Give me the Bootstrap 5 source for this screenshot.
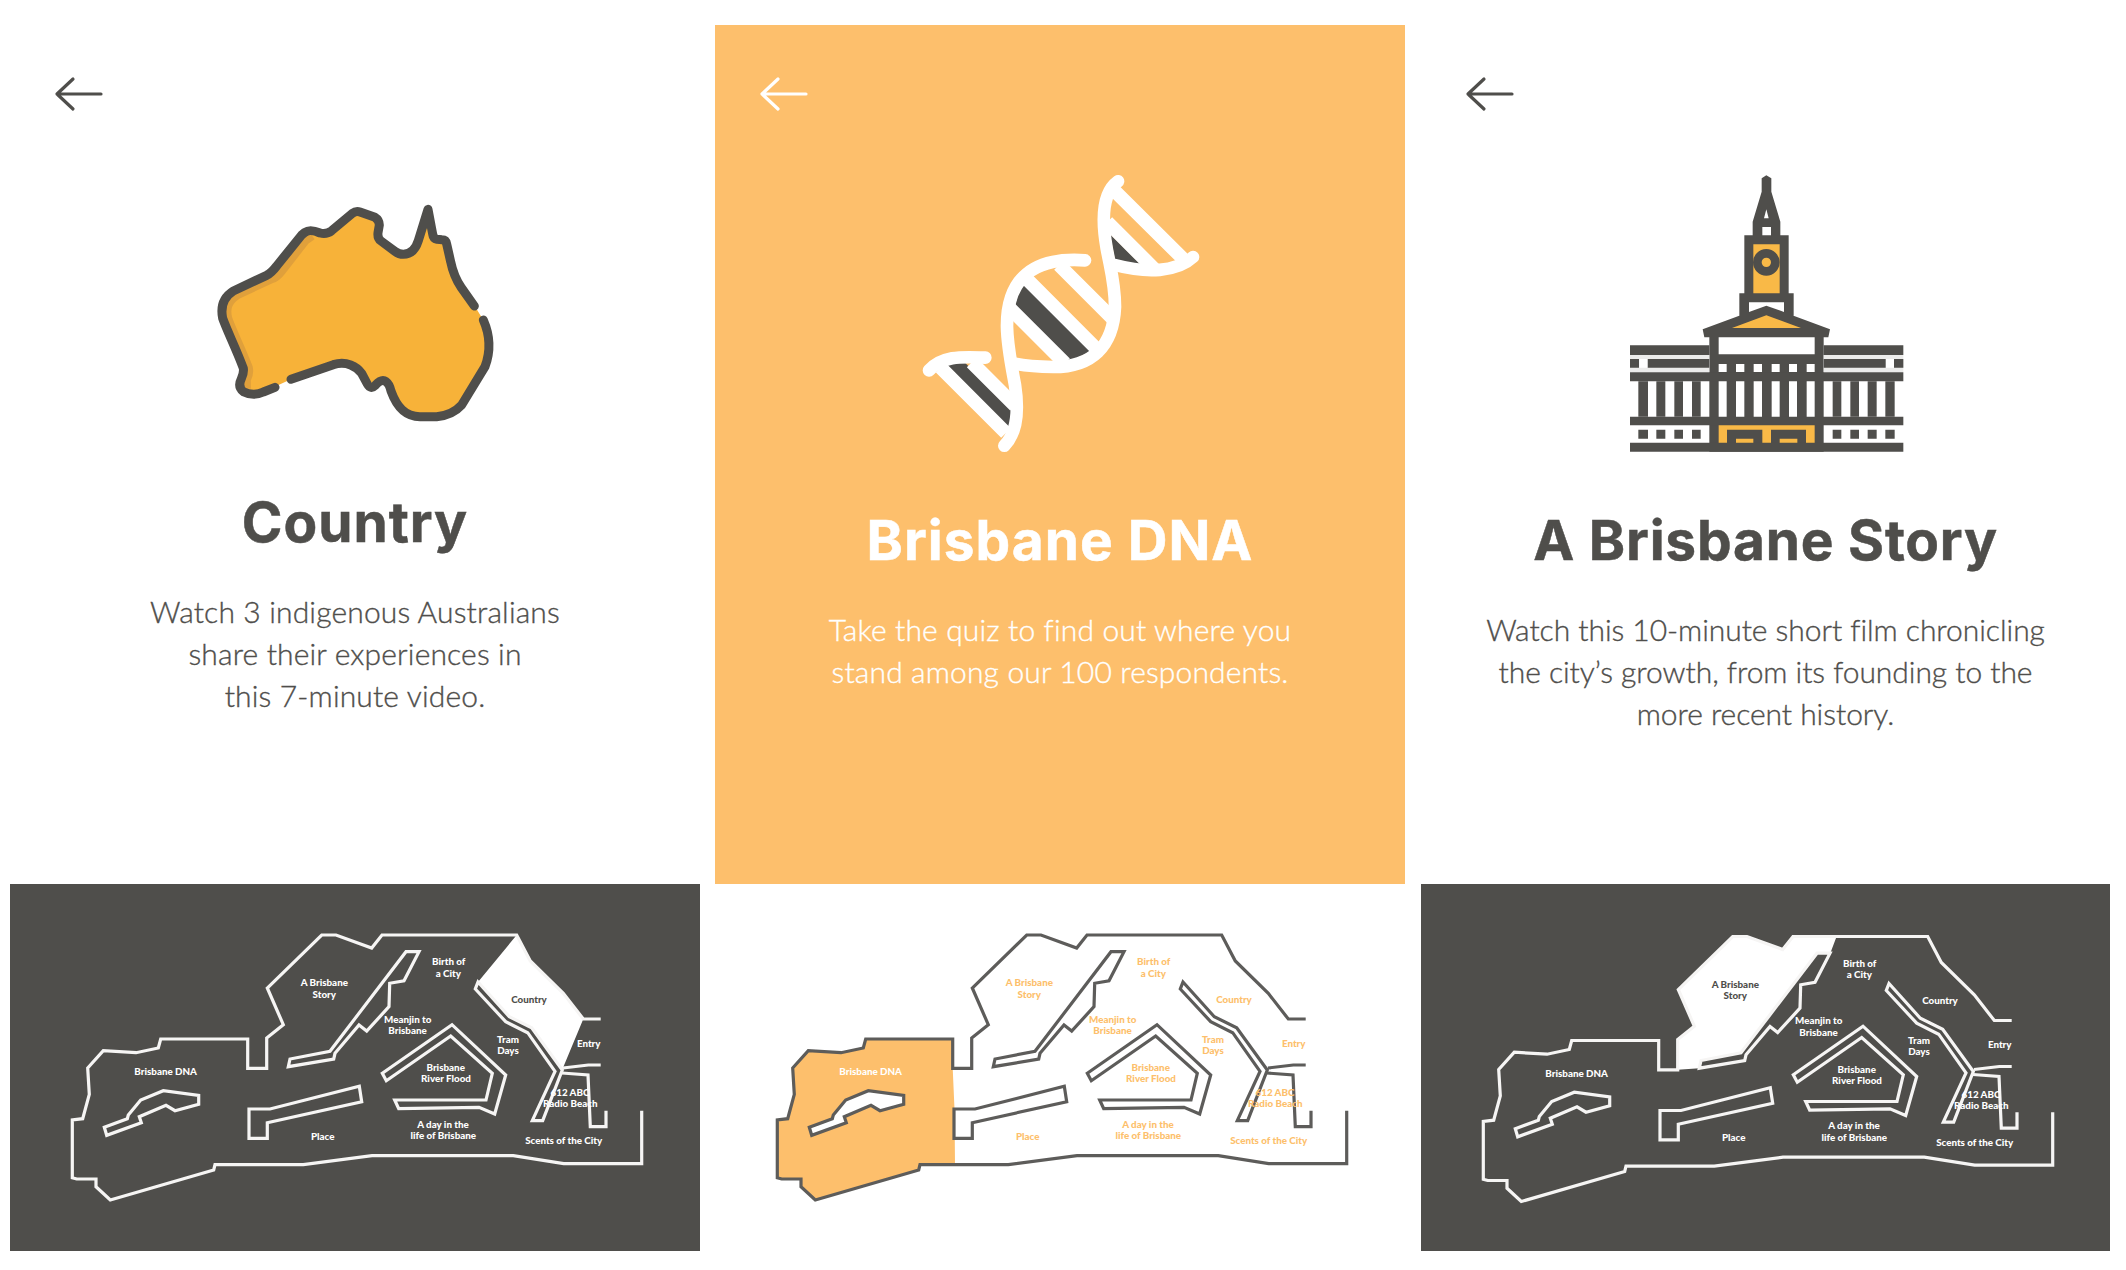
<!DOCTYPE html>
<html lang="en">
<head>
<meta charset="utf-8">
<title>Museum guide</title>
<link href="https://cdn.jsdelivr.net/npm/bootstrap@5.3.0/dist/css/bootstrap.min.css" rel="stylesheet">
<style>
:root{--ink:#4f4e4b;--sun:#fdbf6c}
body{font-family:Lato,"Liberation Sans",sans-serif;color:var(--ink);background:#fff}
.screens{padding:25px 15px 0 10px;gap:15px}
.screen{width:690px;flex:none}
.screen-last{width:689px;margin-left:1px}
.info{height:859px}
.info-sun{background:var(--sun);color:#fff}
.back-btn{margin:48px 0 0 41px;width:56px;height:42px;color:inherit}
.art{margin-top:45px;flex:none}
.art-low{margin-top:75px}
.screen-last .art{margin-right:1px}
.title{font-family:Inter,"Liberation Sans",sans-serif;font-weight:700;font-size:55px;line-height:60px;letter-spacing:1px;margin:40.400px 0 0;white-space:nowrap;-webkit-text-stroke:.5px currentColor}
.screen-last .title{letter-spacing:.8px}
.art-low + .title{margin-top:52px}
.story{font-weight:300;font-size:30px;line-height:42.300px;letter-spacing:.150px;margin:37.500px 0 0;white-space:nowrap;-webkit-text-stroke:.35px currentColor}
.screen-last .story{letter-spacing:-.050px}
.plan{height:367px;background:var(--ink);--line:#f6f5f4;--void:#4f4e4b;--label:#fff}
.plan-light{background:#fff;--line:#5d5c5a;--void:#fff;--label:#fdbf6c}
.floor-labels text{font-family:Lato,"Liberation Sans",sans-serif;font-weight:900;font-size:9.800px;text-anchor:middle}
</style>
</head>
<body>
<svg width="0" height="0" class="position-absolute" aria-hidden="true">
  <symbol id="arrow" viewBox="0 0 56 42"><path d="M50 21H6M22 6L6 21l16 15" fill="none" stroke="currentColor" stroke-width="3.200" stroke-linecap="round" stroke-linejoin="round"/></symbol>
  <symbol id="floor" viewBox="10 884 690 367">
    <g fill="none" stroke="var(--line)" stroke-width="3.200">
      <path d="M641.700 1110.700V1163.700H563.700L513.300 1155.700H372L303.300 1164.700H215L213.700 1170 110.300 1200 96 1186.700V1179H76.700L72.300 1177.700V1120L82.700 1118.700 89.300 1094.300 87.700 1068 103.300 1050.700 136 1052.700 158.300 1048 160.700 1039H247.700V1068.300H266.700V1038L283.300 1024.700 267.300 988 321.700 935H336L371.700 948 382 935H516.700L530.300 961 563.300 993.300 583.300 1019H600.700"/>
      <path d="M600.700 1065H588.300L563 1068"/>
      <path d="M562 1073 588 1075 590.300 1126.700H606V1110.700"/>
      <g fill="var(--void)">
        <path d="M478 982 509.300 1016.700 531.700 1027.700 562.300 1070 542.700 1120.700H532.300L555 1071.300 527.700 1032.700 505.700 1021.700 475.300 989Z"/>
        <path d="M382.300 1073.300 452 1024.700 505.700 1075 494.700 1114 479 1107.300 398.700 1108.700 394.700 1100H486L492.300 1073.300 450.700 1036 386.300 1080.700Z"/>
        <path d="M406 951.700H419L404 980.700 389.700 983.300 389 1006.700 366.700 1031 359 1025 335 1053.300 333.700 1059 288.300 1066.700 290 1059 330 1051.300Z"/>
        <path d="M249 1109H270L359.300 1086.300 361.700 1101.700 267.300 1122.700V1138.300H249Z"/>
        <path d="M104.300 1127.300 127.300 1118.700 128.300 1115 140.700 1100 163.300 1090.700 198.700 1095.300V1104.300L175 1110.700 166 1105.300 139.300 1116.700 141.300 1122.700 106.700 1135.300Z"/>
      </g>
    </g>
    <g class="floor-labels" fill="var(--label)">
      <g style="fill:var(--story-label,var(--label))"><text x="324.300" y="986.300">A Brisbane</text><text x="324.300" y="997.700">Story</text></g>
      <text x="165.700" y="1075.300" style="fill:var(--dna-label,var(--label))">Brisbane DNA</text>
      <text x="322.700" y="1139.700">Place</text>
      <text x="448.700" y="965.300">Birth of</text><text x="448.400" y="976.700">a City</text>
      <text x="529" y="1002.700" style="fill:var(--country-label,var(--label))">Country</text>
      <text x="407.700" y="1022.700">Meanjin to</text><text x="407.500" y="1034">Brisbane</text>
      <text x="508" y="1042.700">Tram</text><text x="508" y="1053.700">Days</text>
      <text x="588.700" y="1046.700">Entry</text>
      <text x="445.700" y="1071.300">Brisbane</text><text x="446" y="1082.300">River Flood</text>
      <text x="443" y="1127.700">A day in the</text><text x="443.300" y="1139">life of Brisbane</text>
      <text x="570" y="1096.300">612 ABC</text><text x="570.300" y="1107.300">Radio Beach</text>
      <text x="563.700" y="1144.300">Scents of the City</text>
    </g>
  </symbol>
</svg>

<main class="screens d-flex align-items-start">
  <section class="screen">
    <div class="info d-flex flex-column align-items-center text-center">
      <button class="back-btn btn p-0 border-0 align-self-start d-flex" aria-label="Back"><svg width="56" height="42"><use href="#arrow"/></svg></button>
      <svg class="art art-low" width="310" height="250" viewBox="0 0 930 750" fill="none" stroke-linecap="round" stroke-linejoin="round">
        <path fill="#f7b239" d="M824 348C790 300 770 275 757 225Q742 165 738 155L700 149 684 58 655 165Q640 193 610 193 597 193 585 184L540 152Q532 145 534 128L538 105Q538 90 525 82L480 66 395 122 360 129 315 127 230 228 200 256 100 303C65 325 62 355 68 385 80 420 110 480 130 535L124 600 190 606 273 568 400 524C440 512 470 530 485 550L510 592 558 575 573 603C585 650 615 680 660 680H710Q760 675 785 645L855 530C870 490 872 440 850 390Z"/>
        <path stroke="#e0a03b" stroke-width="27" stroke-linecap="butt" d="M336 137 316 151 245 242Q230 262 215 266L112 314C80 335 77 358 83 385 95 420 125 480 145 533Q149 550 139 570V596"/>
        <g stroke="#4f4e4b" stroke-width="27">
          <path d="M823 348 784 293C765 265 757 240 752 215L740 162Q738 149 726 149L711 148Q700 146 698 132L684 58 655 152Q642 193 610 193 597 193 585 184L543 153Q532 145 534 128L538 105Q538 90 525 82L480 66Q468 62 457 70L395 122Q380 134 360 129 330 116 315 127L305 135 230 228Q215 248 200 256L100 303C65 325 62 355 68 385 80 420 110 480 130 535Q132 550 124 566 112 590 130 605 160 620 190 606L225 592"/>
          <path d="M273 568 400 524C440 512 470 530 485 550L502 582Q512 600 526 586 545 565 558 575 568 582 573 603C590 650 615 680 660 680H710C745 677 767 665 785 645L855 530C870 490 872 440 850 390"/>
        </g>
      </svg>
      <h1 class="title">Country</h1>
      <p class="story">Watch 3 indigenous Australians<br>share their experiences in<br>this 7-minute video.</p>
    </div>
    <div class="plan" style="--country-label:#4f4e4b">
      <svg class="d-block" width="690" height="367" viewBox="10 884 690 367">
        <path fill="#fff" d="M516.700 935 530.300 961 563.300 993.300 583.300 1019 562.500 1069 531.700 1027.700 509.300 1016.700 478 982Z"/>
        <use href="#floor" x="10" y="884" width="690" height="367"/>
      </svg>
    </div>
  </section>

  <section class="screen">
    <div class="info info-sun d-flex flex-column align-items-center text-center">
      <button class="back-btn btn p-0 border-0 align-self-start d-flex" aria-label="Back"><svg width="56" height="42"><use href="#arrow"/></svg></button>
      <svg class="art" width="320" height="310" viewBox="0 0 960 930" fill="none" stroke="#fff" stroke-linecap="round">
        <g fill="#4f4e4b" stroke="none"><path d="M630 222 725 316 645 300ZM371 370 575 572 510 605 340 434ZM138 612 193 606 335 750 327 808Z"/></g>
        <g stroke-width="41" stroke-linecap="butt"><path d="M640 89 850 297M622 186 766 330M477 315 635 473M373 350 590 567M330 445 495 610M215 607 345 737M122 623 318 819"/></g>
        <g stroke-width="38">
          <path d="M654 64C607 98 604 175 620 265 632 330 645 370 645 440 640 560 575 621 460 621 415 620 380 618 345 611"/>
          <path d="M555 301C400 290 320 355 321 500 322 560 335 620 345 675 358 760 350 820 313 857"/>
          <path d="M87 631C130 585 190 591 256 593"/>
          <path d="M879 291C830 337 740 340 645 315"/>
        </g>
      </svg>
      <h1 class="title">Brisbane DNA</h1>
      <p class="story">Take the quiz to find out where you<br>stand among our 100 respondents.</p>
    </div>
    <div class="plan plan-light" style="--dna-label:#fff">
      <svg class="d-block" width="690" height="367" viewBox="10 884 690 367">
        <path fill="#fdbf6c" d="M250 1164.700H215L213.700 1170 110.300 1200 96 1186.700V1179H72.300V1120L82.700 1118.700 89.300 1094.300 87.700 1068 103.300 1050.700 136 1052.700 158.300 1048 160.700 1039H247.700V1068.300L249.500 1109Z"/>
        <use href="#floor" x="10" y="884" width="690" height="367"/>
      </svg>
    </div>
  </section>

  <section class="screen screen-last">
    <div class="info d-flex flex-column align-items-center text-center">
      <button class="back-btn btn p-0 border-0 align-self-start d-flex" aria-label="Back"><svg width="56" height="42"><use href="#arrow"/></svg></button>
      <svg class="art" width="310" height="310" viewBox="0 0 930 930" fill="#4f4e4b">
        <path d="M455 55 469 46 484 55V95L511 185V228H428V185L455 95ZM403 226H536V400H551V470H388V400H403ZM469 437 660 508 655 532H641V875H298V532H283L278 508Z"/>
        <g fill="#ececeb"><path d="M60 585H298V637H60ZM641 585H880V637H641Z"/></g>
        <path d="M60 556H298V585H60ZM641 556H880V585H641ZM60 597H87V623H60ZM113 597H298V623H113ZM641 597H827V623H641ZM852 597H880V623H852ZM60 637H880V664H60ZM60 770H880V796H60ZM60 848H880V875H60Z"/>
        <path d="M85 664h29v106h-29zM139 664h27v106h-27zM193 664h26v106h-26zM246 664h26v106h-26zM668 664h26v106h-26zM721 664h26v106h-26zM773 664h27v106h-27zM826 664h28v106h-28z"/>
        <path d="M85 809h29v27h-29zM139 809h27v27h-27zM193 809h26v27h-26zM246 809h26v27h-26zM668 809h26v27h-26zM721 809h26v27h-26zM773 809h27v27h-27zM826 809h28v27h-28z"/>
        <g fill="#fff"><path d="M469 148 476 175H462ZM457 201H483V226H457ZM417 427H522V456L469 437 417 456ZM326 532H614V583H326ZM88 597h24v26h-24zM828 597h24v26h-24z"/>
        <path d="M326 612h24v24h-24zM378 612h25v24h-25zM431 612h25v24h-25zM485 612h24v24h-24zM537 612h24v24h-24zM590 612h24v24h-24zM326 664h24v106h-24zM378 664h25v106h-25zM431 664h25v106h-25zM485 664h24v106h-24zM537 664h24v106h-24zM590 664h24v106h-24z"/></g>
        <path fill="#f9b947" d="M430 253H509V400H430ZM469 466 573 504H366ZM326 796H614V848H588V809H483V848H457V809H351V848H326ZM378 836H430V848H378ZM509 836H562V848H509Z"/>
        <circle cx="469" cy="307" r="27" fill="#f9b947" stroke="#4f4e4b" stroke-width="26"/>
      </svg>
      <h1 class="title">A Brisbane Story</h1>
      <p class="story">Watch this 10-minute short film chronicling<br>the city’s growth, from its founding to the<br>more recent history.</p>
    </div>
    <div class="plan" style="--story-label:#4f4e4b">
      <svg class="d-block" width="689" height="367" viewBox="10 882.500 689 367">
        <path fill="#fff" d="M266.700 1068.300V1038L283.300 1024.700 267.300 988 321.700 935H336L371.700 948 382 935H425.600L419.300 951.700H406L330 1051.300 290 1059 288.300 1066.700Z"/>
        <use href="#floor" x="10" y="884" width="690" height="367"/>
      </svg>
    </div>
  </section>
</main>
<script src="https://cdn.jsdelivr.net/npm/bootstrap@5.3.0/dist/js/bootstrap.bundle.min.js"></script>
</body>
</html>
